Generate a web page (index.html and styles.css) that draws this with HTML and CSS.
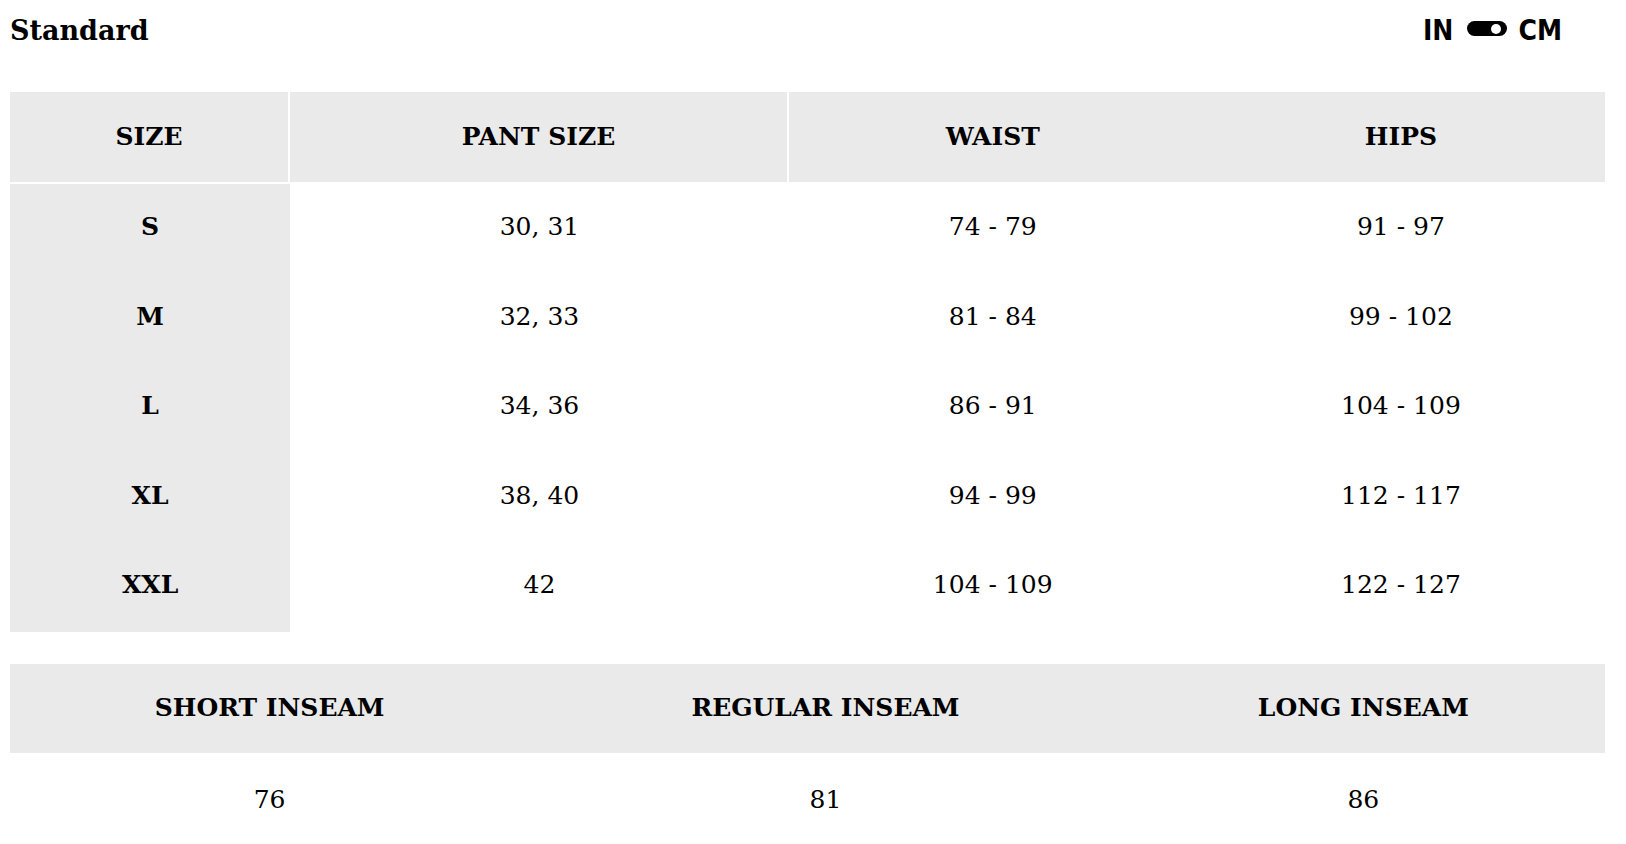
FILE: index.html
```html
<!DOCTYPE html>
<html lang="en">
<head>
<meta charset="utf-8">
<title>Size chart</title>
<link rel="stylesheet" href="styles.css">
</head>
<body>
<div class="page">
  <div class="topbar">
    <h2 class="title">Standard</h2>
    <div class="units">
      <span class="unit">IN</span>
      <span class="switch"><span class="knob"></span></span>
      <span class="unit">CM</span>
    </div>
  </div>

  <table class="chart">
    <thead>
      <tr>
        <th>SIZE</th>
        <th>PANT SIZE</th>
        <th>WAIST</th>
        <th>HIPS</th>
      </tr>
    </thead>
    <tbody>
      <tr><td>S</td><td>30, 31</td><td>74 - 79</td><td>91 - 97</td></tr>
      <tr><td>M</td><td>32, 33</td><td>81 - 84</td><td>99 - 102</td></tr>
      <tr><td>L</td><td>34, 36</td><td>86 - 91</td><td>104 - 109</td></tr>
      <tr><td>XL</td><td>38, 40</td><td>94 - 99</td><td>112 - 117</td></tr>
      <tr><td>XXL</td><td>42</td><td>104 - 109</td><td>122 - 127</td></tr>
    </tbody>
  </table>

  <table class="chart inseam">
    <thead>
      <tr>
        <th>SHORT INSEAM</th>
        <th>REGULAR INSEAM</th>
        <th>LONG INSEAM</th>
      </tr>
    </thead>
    <tbody>
      <tr><td>76</td><td>81</td><td>86</td></tr>
    </tbody>
  </table>
</div>
</body>
</html>
```

FILE: styles.css
```css
html, body {
  margin: 0;
  padding: 0;
  background: #ffffff;
}

body {
  font-family: "DejaVu Serif", "Liberation Serif", serif;
  color: #000000;
}

.page {
  padding: 0 21px 0 10px;
}

.topbar {
  display: flex;
  justify-content: space-between;
  align-items: flex-start;
  height: 92px;
  box-sizing: border-box;
  padding-top: 15px;
}

.title {
  margin: 0;
  font-size: 27px;
  font-weight: bold;
  line-height: 32px;
}

.units {
  display: flex;
  align-items: center;
  margin-top: 2px;
  margin-right: 43px;
}

.unit {
  font-family: "DejaVu Sans Condensed", "DejaVu Sans", sans-serif;
  font-stretch: condensed;
  font-weight: bold;
  font-size: 28px;
  line-height: 28px;
}

.switch {
  display: flex;
  justify-content: flex-end;
  align-items: center;
  width: 40px;
  height: 15px;
  box-sizing: border-box;
  padding-right: 6px;
  margin: 0 11px 5px 14px;
  border-radius: 8px;
  background: #000000;
}

.knob {
  width: 10px;
  height: 10px;
  border-radius: 50%;
  background: #ffffff;
}

.chart {
  width: 100%;
  border-collapse: separate;
  border-spacing: 0;
  font-size: 25px;
}

.chart th {
  background: #eaeaea;
  font-weight: bold;
  line-height: 30px;
  padding: 30px 21px;
  border-bottom: 2px solid #ffffff;
  text-align: center;
}

.chart thead th:nth-child(1),
.chart thead th:nth-child(2) {
  border-right: 2px solid #ffffff;
}

.chart.inseam thead th {
  border-right: 0;
  padding: 29.5px 21px;
}

.chart td {
  font-weight: normal;
  line-height: 30px;
  padding: 28px 21px 31.6px;
  text-align: center;
}

.chart tbody td:first-child {
  background: #eaeaea;
  font-weight: bold;
}

.chart.inseam tbody td:first-child {
  background: transparent;
  font-weight: normal;
}

.chart.inseam td {
  padding: 29.8px 21px;
}

.inseam {
  margin-top: 32px;
}
```
